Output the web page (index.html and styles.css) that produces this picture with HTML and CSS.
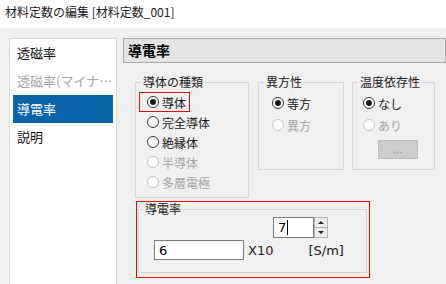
FILE: index.html
```html
<!DOCTYPE html>
<html>
<head>
    <meta charset="UTF-8">
    <title>材料定数の編集</title>
    <link rel="stylesheet" href="styles.css">
</head>
<body>
<div class="titlebar">材料定数の編集 [材料定数_001]</div>

<div class="main">
    <ul class="nav">
        <li>透磁率</li>
        <li class="disabled">透磁率(マイナーループ)</li>
        <li class="active">導電率</li>
        <li>説明</li>
    </ul>

    <div class="content">
        <div class="heading">導電率</div>

        <div class="groups">
            <fieldset class="group g-type">
                <legend>導体の種類</legend>
                <div class="opts">
                    <label class="opt focus"><span class="radio on"></span>導体</label>
                    <label class="opt"><span class="radio"></span>完全導体</label>
                    <label class="opt"><span class="radio"></span>絶縁体</label>
                    <label class="opt disabled"><span class="radio"></span>半導体</label>
                    <label class="opt disabled"><span class="radio"></span>多層電極</label>
                </div>
            </fieldset>

            <fieldset class="group g-aniso">
                <legend>異方性</legend>
                <div class="opts">
                    <label class="opt"><span class="radio on"></span>等方</label>
                    <label class="opt disabled"><span class="radio"></span>異方</label>
                </div>
            </fieldset>

            <fieldset class="group g-temp">
                <legend>温度依存性</legend>
                <div class="opts">
                    <label class="opt"><span class="radio on"></span>なし</label>
                    <label class="opt disabled"><span class="radio"></span>あり</label>
                    <button class="more" disabled>...</button>
                </div>
            </fieldset>
        </div>

        <div class="highlight">
            <fieldset class="group g-cond">
                <legend>導電率</legend>
                <div class="exp-row">
                    <div class="spin">
                        <div class="spin-field">7<span class="caret"></span></div>
                        <div class="spin-btns">
                            <span class="spin-btn"><i class="tri up"></i></span>
                            <span class="spin-btn"><i class="tri down"></i></span>
                        </div>
                    </div>
                </div>
                <div class="val-row">
                    <div class="field">6</div>
                    <span class="x10">X10</span>
                    <span class="unit">[S/m]</span>
                </div>
            </fieldset>
        </div>
    </div>
</div>
</body>
</html>
```

FILE: styles.css
```css
* {
    box-sizing: border-box;
}

html, body {
    margin: 0;
    height: 100%;
    overflow: hidden;
}

body {
    font-family: "Noto Sans CJK JP", sans-serif;
    font-size: 12px;
    color: #1a1a1a;
    background-color: #ffffff;
}

.titlebar {
    height: 28px;
    line-height: 24px;
    padding-left: 5px;
    font-size: 12px;
    color: #1a1a1a;
}

.main {
    display: flex;
    gap: 6px;
    height: 256px;
    padding: 10px 0 0 9px;
    background-color: #f0f0f0;
}

/* 左側のリスト */
.nav {
    list-style: none;
    margin: 0;
    padding: 0 3px;
    width: 108px;
    background-color: #ffffff;
    border: 1px solid #d9d9d9;
    border-bottom: none;
}

.nav li {
    height: 28px;
    line-height: 28px;
    padding-left: 4px;
    font-size: 13px;
    color: #111;
    white-space: nowrap;
    overflow: hidden;
    text-overflow: ellipsis;
}

.nav li.disabled {
    color: #a6a6a6;
}

.nav li.active {
    background-color: #0a64a8;
    color: #ffffff;
}

.content {
    flex: 1;
}

.heading {
    height: 25px;
    line-height: 23px;
    padding-left: 4px;
    font-size: 14px;
    font-weight: bold;
    color: #000;
    background-color: #e4e4e4;
    border: 1px solid #a9a9a9;
}

.groups {
    display: flex;
    align-items: flex-start;
    margin: 12px 0 0 12px;
}

.group {
    margin: 0;
    padding: 0;
    border: 1px solid #d6d6d6;
}

.group legend {
    margin-left: 5px;
    padding: 0 2px;
    font-size: 12px;
    line-height: 14px;
    color: #1a1a1a;
}

.g-type {
    width: 114px;
    margin-right: 9px;
}

.g-aniso {
    width: 86px;
    height: 95px;
    margin-right: 8px;
}

.g-temp {
    width: 83px;
    height: 95px;
}

.opts {
    display: flex;
    flex-direction: column;
    align-items: flex-start;
    padding-top: 3px;
}

.g-type .opts {
    padding: 3px 0 5px 3px;
}

.g-aniso .opts {
    padding-left: 13px;
}

.g-temp .opts {
    padding-left: 10px;
}

.opt {
    display: flex;
    align-items: center;
    gap: 3px;
    height: 22px;
    font-size: 12px;
    color: #1a1a1a;
}

.g-type .opt {
    height: 20px;
    padding: 0 3px 0 7px;
    border: 1px solid transparent;
}

.g-type .opt.focus {
    border-color: #e01010;
}

.opt.disabled {
    color: #a6a6a6;
}

.radio {
    display: flex;
    align-items: center;
    justify-content: center;
    width: 12px;
    height: 12px;
    border: 1px solid #333;
    border-radius: 50%;
    background-color: #fff;
}

.radio.on::after {
    content: "";
    width: 6px;
    height: 6px;
    border-radius: 50%;
    background-color: #1a1a1a;
}

.opt.disabled .radio {
    border-color: #c8c8c8;
}

.more {
    width: 40px;
    height: 19px;
    margin: 4px 0 0 15px;
    padding: 0;
    font-family: "DejaVu Sans", sans-serif;
    font-size: 10px;
    line-height: 15px;
    color: #8a8a8a;
    background-color: #cccccc;
    border: 1px solid #bdbdbd;
}

/* 赤枠部分 */
.highlight {
    width: 234px;
    margin: 3px 0 0 13px;
    padding: 0 2px 4px 1px;
    border: 1px solid #ff0000;
}

.g-cond {
    height: 71px;
}

.g-cond legend {
    margin-left: 4px;
}

.exp-row {
    display: flex;
    padding: 1px 0 0 134px;
}

.spin {
    display: flex;
    height: 21px;
}

.spin-field,
.field {
    display: flex;
    align-items: center;
    padding-left: 4px;
    font-family: "DejaVu Sans", sans-serif;
    font-size: 13px;
    color: #000;
    background-color: #fff;
    border: 1px solid #7a7a7a;
}

.spin-field {
    width: 41px;
    height: 21px;
}

.caret {
    width: 1px;
    height: 15px;
    margin-left: 1px;
    background-color: #000;
}

.spin-btns {
    display: flex;
    flex-direction: column;
    width: 14px;
}

.spin-btn {
    flex: 1;
    display: flex;
    align-items: center;
    justify-content: center;
    background-color: #ececec;
    border: 1px solid #b4b4b4;
}

.spin-btn + .spin-btn {
    border-top: none;
}

.tri {
    width: 0;
    height: 0;
    border-left: 3px solid transparent;
    border-right: 3px solid transparent;
}

.tri.up {
    border-bottom: 3px solid #222;
}

.tri.down {
    border-top: 3px solid #222;
}

.val-row {
    display: flex;
    align-items: center;
    padding: 2px 0 0 15px;
}

.field {
    width: 90px;
    height: 20px;
}

.x10,
.unit {
    font-family: "DejaVu Sans", sans-serif;
    font-size: 13px;
    color: #1a1a1a;
}

.x10 {
    margin-left: 4px;
}

.unit {
    margin-left: 35px;
}
```
